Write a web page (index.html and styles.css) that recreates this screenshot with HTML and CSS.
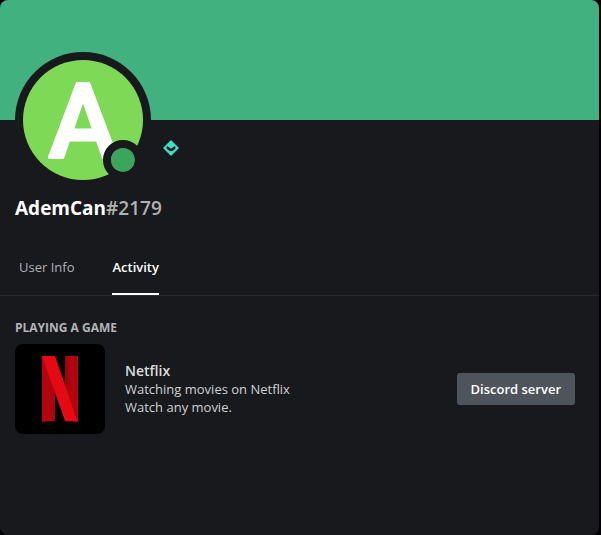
FILE: index.html
```html
<!DOCTYPE html>
<html lang="en">
<head>
<meta charset="utf-8">
<title>AdemCan</title>
<link rel="stylesheet" href="styles.css">
</head>
<body>
<main class="profile">
  <div class="banner"></div>
  <header class="header">
    <div class="avatar">
      <svg class="avatar-image" viewBox="0 0 120 120" role="img" aria-label="AdemCan">
        <circle cx="60" cy="60" r="60" fill="#7ed957"/>
        <text class="avatar-letter" x="60" y="97" text-anchor="middle">A</text>
      </svg>
      <span class="status"></span>
    </div>
    <svg class="badge" viewBox="0 0 16 16" aria-hidden="true">
      <path d="M8 0 16 8 8 16 0 8Z" fill="#3edfc0"/>
      <path d="M4 6 8 8.8 12 6 12.6 8C11.6 9.6 10 11 8 11.2 6 11 4.4 9.6 3.4 8Z" fill="#18191c"/>
    </svg>
  </header>
  <h1 class="name">AdemCan<span class="tag">#2179</span></h1>
  <nav class="tabs">
    <a class="tab" href="#info">User Info</a>
    <a class="tab active" href="#activity">Activity</a>
  </nav>
  <section class="activity" id="activity">
    <h2 class="heading">PLAYING A GAME</h2>
    <div class="game">
      <svg class="cover" viewBox="0 0 90 90" role="img" aria-label="Netflix">
        <defs>
          <linearGradient id="left" x1="0" y1="0" x2="1" y2="0">
            <stop offset="0" stop-color="#b1060f"/><stop offset=".65" stop-color="#b1060f"/><stop offset="1" stop-color="#a0060e"/>
          </linearGradient>
          <linearGradient id="fold" x1="0" y1=".55" x2="1" y2=".35">
            <stop offset="0" stop-color="#950009"/><stop offset=".5" stop-color="#b1060f"/>
          </linearGradient>
        </defs>
        <rect width="90" height="90"/>
        <path d="M27 12H40V77Q33 77 27 78Z" fill="url(#left)"/>
        <path d="M50 12H63V78L50 42Z" fill="url(#fold)"/>
        <path d="M27 12H40L63 78Q56 77 50 77Z" fill="#e50914"/>
      </svg>
      <div class="details">
        <h3 class="title">Netflix</h3>
        <p class="line">Watching movies on Netflix</p>
        <p class="line">Watch any movie.</p>
      </div>
      <button class="action" type="button">Discord server</button>
    </div>
  </section>
</main>
</body>
</html>
```
FILE: styles.css
```css
* { box-sizing: border-box; }
html { background: #000; }
body {
  margin: 0;
  padding-right: 2px;
  min-height: 100vh;
  display: flex;
  font-family: "Open Sans", "Noto Sans", sans-serif;
  color: #cfd1d3;
}
h1, h2, h3, p { margin: 0; }
.profile {
  flex: 1;
  background: #18191c;
  border-radius: 8px;
  overflow: hidden;
}
.banner { height: 120px; background: #41b17f; }
.header {
  display: flex;
  align-items: flex-end;
  gap: 12px;
  margin-top: -68px;
  padding: 0 15px;
}
.avatar {
  position: relative;
  width: 136px;
  height: 136px;
  padding: 8px;
  border-radius: 50%;
  background: #18191c;
}
.avatar-image { display: block; width: 120px; height: 120px; overflow: visible; }
.avatar-letter {
  font-family: Roboto, sans-serif;
  font-weight: 500;
  font-size: 104px;
  fill: #fff;
  stroke: #fff;
  stroke-width: 3px;
  stroke-linejoin: round;
}
.status {
  position: absolute;
  right: 8px;
  bottom: 8px;
  width: 40px;
  height: 40px;
  border: 8px solid #18191c;
  border-radius: 50%;
  background: #3ba55c;
  background-clip: padding-box;
}
.badge { width: 16px; height: 16px; margin-bottom: 32px; }
.name {
  padding: 6px 15px 0;
  font-size: 19px;
  line-height: 28px;
  font-weight: 700;
  color: #fff;
}
.tag { color: #b0b2b5; font-weight: 600; }
.tabs {
  display: flex;
  gap: 38px;
  margin-top: 18px;
  padding: 0 19px;
  border-bottom: 1px solid #292b2f;
}
.tab {
  height: 55px;
  line-height: 55px;
  font-size: 13px;
  font-weight: 500;
  color: #b0b2b5;
  text-decoration: none;
}
.tab.active { color: #fff; font-weight: 600; border-bottom: 2px solid #fff; }
.activity { padding: 24px 24px 0 15px; }
.heading {
  font-size: 12px;
  line-height: 16px;
  font-weight: 700;
  color: #b3b5b8;
}
.game { display: flex; align-items: center; gap: 20px; margin-top: 8px; }
.cover { width: 90px; height: 90px; border-radius: 8px; }
.details { flex: 1; font-size: 13px; line-height: 18px; }
.title { font-size: 14px; line-height: 18px; font-weight: 600; color: #dcddde; }
.action {
  height: 32px;
  padding: 0 14px;
  border: 0;
  border-radius: 3px;
  background: #4f545c;
  color: #fff;
  font: 600 13px/32px "Open Sans", "Noto Sans", sans-serif;
}
```
